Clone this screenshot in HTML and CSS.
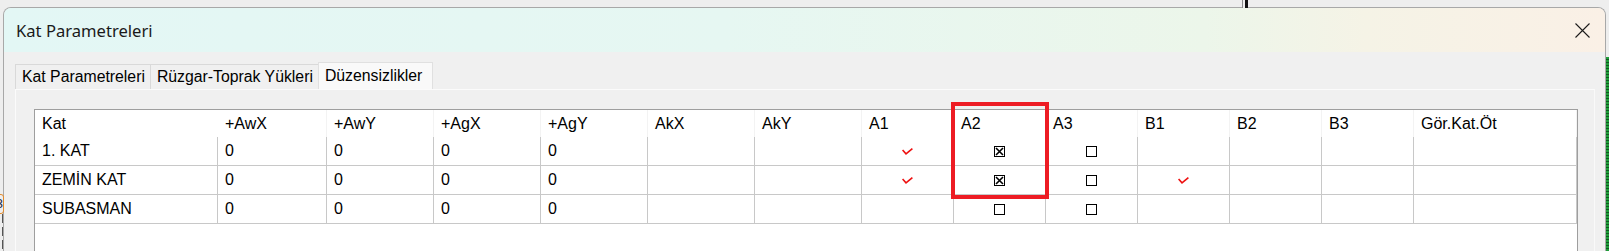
FILE: index.html
```html
<!DOCTYPE html>
<html lang="tr">
<head>
    <meta charset="UTF-8">
    <title>Kat Parametreleri</title>
    <link rel="stylesheet" href="styles.css">
</head>
<body>
    <div class="desk">
        <!-- arka plandaki pencere parcalari -->
        <div class="bg-line"></div>
        <div class="bg-num">3</div>
        <div class="bg-dash"></div>
        <div class="bg-green"></div>

        <div class="dialog">
            <div class="titlebar">
                <span class="title">Kat Parametreleri</span>
                <svg class="close" width="15" height="15" viewBox="0 0 15 15">
                    <path d="M0.5 0.5 L14.5 14.5 M14.5 0.5 L0.5 14.5" stroke="#1c1c1c" stroke-width="1.1" fill="none"/>
                </svg>
            </div>

            <div class="dlg-body">
                <div class="tabs">
                    <div class="tab">Kat Parametreleri</div>
                    <div class="tab">Rüzgar-Toprak Yükleri</div>
                    <div class="tab active">Düzensizlikler</div>
                </div>

                <div class="tab-page">
                    <div class="grid">
                        <div class="row head">
                            <div class="cell">Kat</div>
                            <div class="cell">+AwX</div>
                            <div class="cell">+AwY</div>
                            <div class="cell">+AgX</div>
                            <div class="cell">+AgY</div>
                            <div class="cell">AkX</div>
                            <div class="cell">AkY</div>
                            <div class="cell">A1</div>
                            <div class="cell">A2</div>
                            <div class="cell">A3</div>
                            <div class="cell">B1</div>
                            <div class="cell">B2</div>
                            <div class="cell">B3</div>
                            <div class="cell">Gör.Kat.Öt</div>
                        </div>

                        <div class="row">
                            <div class="cell">1. KAT</div>
                            <div class="cell">0</div>
                            <div class="cell">0</div>
                            <div class="cell">0</div>
                            <div class="cell">0</div>
                            <div class="cell"></div>
                            <div class="cell"></div>
                            <div class="cell mid"><svg class="tick" width="11" height="7" viewBox="0 0 11 7"><path d="M0.6 2 L4 5.8 L10.4 0.6" stroke="#ee1111" stroke-width="1.6" fill="none"/></svg></div>
                            <div class="cell mid"><svg width="11" height="11" viewBox="0 0 11 11"><rect x="0.5" y="0.5" width="10" height="10" fill="#fff" stroke="#000"/><path d="M2 2 L9 9 M9 2 L2 9" stroke="#000" stroke-width="1.6"/></svg></div>
                            <div class="cell mid"><svg width="11" height="11" viewBox="0 0 11 11"><rect x="0.5" y="0.5" width="10" height="10" fill="#fff" stroke="#000"/></svg></div>
                            <div class="cell"></div>
                            <div class="cell"></div>
                            <div class="cell"></div>
                            <div class="cell"></div>
                        </div>

                        <div class="row">
                            <div class="cell">ZEMİN KAT</div>
                            <div class="cell">0</div>
                            <div class="cell">0</div>
                            <div class="cell">0</div>
                            <div class="cell">0</div>
                            <div class="cell"></div>
                            <div class="cell"></div>
                            <div class="cell mid"><svg class="tick" width="11" height="7" viewBox="0 0 11 7"><path d="M0.6 2 L4 5.8 L10.4 0.6" stroke="#ee1111" stroke-width="1.6" fill="none"/></svg></div>
                            <div class="cell mid"><svg width="11" height="11" viewBox="0 0 11 11"><rect x="0.5" y="0.5" width="10" height="10" fill="#fff" stroke="#000"/><path d="M2 2 L9 9 M9 2 L2 9" stroke="#000" stroke-width="1.6"/></svg></div>
                            <div class="cell mid"><svg width="11" height="11" viewBox="0 0 11 11"><rect x="0.5" y="0.5" width="10" height="10" fill="#fff" stroke="#000"/></svg></div>
                            <div class="cell mid"><svg class="tick" width="11" height="7" viewBox="0 0 11 7"><path d="M0.6 2 L4 5.8 L10.4 0.6" stroke="#ee1111" stroke-width="1.6" fill="none"/></svg></div>
                            <div class="cell"></div>
                            <div class="cell"></div>
                            <div class="cell"></div>
                        </div>

                        <div class="row">
                            <div class="cell">SUBASMAN</div>
                            <div class="cell">0</div>
                            <div class="cell">0</div>
                            <div class="cell">0</div>
                            <div class="cell">0</div>
                            <div class="cell"></div>
                            <div class="cell"></div>
                            <div class="cell"></div>
                            <div class="cell mid"><svg width="11" height="11" viewBox="0 0 11 11"><rect x="0.5" y="0.5" width="10" height="10" fill="#fff" stroke="#000"/></svg></div>
                            <div class="cell mid"><svg width="11" height="11" viewBox="0 0 11 11"><rect x="0.5" y="0.5" width="10" height="10" fill="#fff" stroke="#000"/></svg></div>
                            <div class="cell"></div>
                            <div class="cell"></div>
                            <div class="cell"></div>
                            <div class="cell"></div>
                        </div>
                    </div>
                </div>
            </div>
        </div>

        <!-- A2 kolonu isaretleme -->
        <div class="mark"></div>
    </div>
</body>
</html>
```

FILE: styles.css
```css
html, body {
    margin: 0;
    padding: 0;
}
body {
    background: #eeeeee;
    font-family: "Liberation Sans", Arial, sans-serif;
    color: #000;
    overflow: hidden;
}
.desk {
    position: relative;
    width: 1609px;
    height: 251px;
    overflow: hidden;
}
.bg-line {
    position: absolute;
    left: 1242px;
    top: 0;
    width: 1px;
    height: 8px;
    background: #8a8a8a;
    border-right: 2px solid #eeeeee;
    box-shadow: 3px 0 0 0 #111;
}
.bg-num {
    position: absolute;
    left: -6px;
    top: 194px;
    width: 8px;
    height: 18px;
    border: 1px solid #e38b2c;
    border-radius: 3px;
    font-size: 13px;
    line-height: 18px;
    text-align: right;
    color: #1b2a4a;
}
.bg-dash {
    position: absolute;
    left: 2px;
    top: 214px;
    width: 1px;
    height: 40px;
    background: repeating-linear-gradient(#555 0 9px, transparent 9px 13px);
}
.bg-green {
    position: absolute;
    left: 1606px;
    top: 57px;
    width: 3px;
    height: 200px;
    background: repeating-linear-gradient(#1f9d3a 0 2px, #0d5a1e 2px 3px);
}
.dialog {
    box-sizing: border-box;
    margin: 7px 0 0 3px;
    width: 1603px;
    height: 260px;
    border: 1px solid #a8a8a8;
    border-bottom: none;
    border-radius: 8px 8px 0 0;
    background: #f0f0f0;
    overflow: hidden;
}
.titlebar {
    height: 44px;
    display: flex;
    align-items: center;
    padding: 0 15px 0 12px;
    background: linear-gradient(90deg, #e3f7f5 0%, #e6f7f2 45%, #ecf6ea 75%, #f5f3e6 85%, #faf0e6 100%);
}
.title {
    font-family: "Noto Sans", sans-serif;
    font-size: 16.6px;
    color: #1a1a1a;
}
.close {
    margin-left: auto;
}
.dlg-body {
    padding: 10px 10px 0 11px;
}
.tabs {
    display: flex;
    align-items: flex-end;
    height: 27px;
}
.tab {
    box-sizing: border-box;
    height: 25px;
    padding: 0 5px 0 6px;
    border: 1px solid #d9d9d9;
    border-bottom: none;
    margin-right: -1px;
    font-size: 15.8px;
    line-height: 24px;
    background: #f0f0f0;
}
.tab.active {
    height: 27px;
    line-height: 25px;
    background: #f9f9f9;
    border-color: #e0e0e0;
    padding: 0 10px 0 6px;
}
.tab-page {
    box-sizing: border-box;
    height: 200px;
    padding: 19px 16px 0 18px;
    border: 1px solid #fbfbfb;
    border-right-color: #f9f9f9;
}
.grid {
    height: 180px;
    border: 1px solid #9e9e9e;
    background: #fff;
}
.row {
    display: grid;
    grid-template-columns: 183px 109px repeat(5, 107px) repeat(6, 92px) 163px;
    height: 29px;
}
.row.head {
    height: 27px;
}
.cell {
    box-sizing: border-box;
    padding-left: 7px;
    font-size: 16px;
    line-height: 28px;
    border-right: 1px solid #c8c8c8;
    border-bottom: 1px solid #c8c8c8;
    white-space: nowrap;
}
.head .cell {
    line-height: 28px;
    border-right-color: #f3f3f3;
    border-bottom: none;
}
.head .cell:first-child {
    border-right-color: #fff;
}
.cell.mid {
    padding-left: 0;
    display: flex;
    align-items: center;
    justify-content: center;
}
.cell.mid svg {
    display: block;
}
.mark {
    position: absolute;
    left: 951px;
    top: 102px;
    width: 90px;
    height: 89px;
    border: 4px solid #ed1c24;
}
```
